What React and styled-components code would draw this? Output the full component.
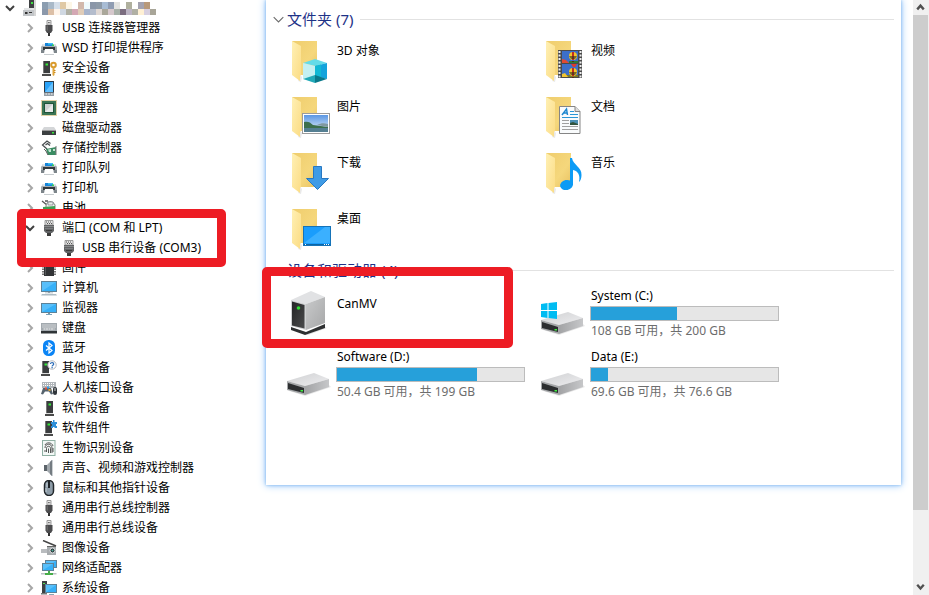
import React from 'react';
import styled, { createGlobalStyle } from 'styled-components';

const GlobalStyle = createGlobalStyle`
  *, *::before, *::after { box-sizing: border-box; }
  body {
    margin: 0;
    background: #fff;
    color: #000;
    font: 12px/16px "Noto Sans", "Noto Sans CJK SC", sans-serif;
    overflow: hidden;
  }
  ul { list-style: none; margin: 0; padding: 0; }
  button { font: inherit; color: inherit; background: none; border: 0; padding: 0; cursor: pointer; }
  svg { display: block; flex: none; }
`;

const Page = styled.main`
  display: flex;
  height: 100vh;
  overflow: hidden;
`;

const Tree = styled.ul`
  flex: 0 0 266px;
`;

const TreeRow = styled.div`
  display: flex;
  align-items: center;
  height: ${(p) => (p.$level === 0 ? 18 : 20)}px;
  padding-left: ${(p) => 2 + p.$level * 20}px;
  padding-bottom: ${(p) => (p.$level === 0 ? 2 : 0)}px;
  white-space: nowrap;
`;

const Toggle = styled.button`
  flex: 0 0 16px;
  height: 16px;
  color: ${(p) => (p.$open ? '#404040' : '#a6a6a6')};
`;

const ToggleSpace = styled.span`
  flex: 0 0 16px;
`;

const TreeIcon = styled.svg`
  width: 16px;
  height: 16px;
  margin: 0 5px 0 3px;
`;

const HighlightedGroup = styled.li`
  position: relative;
`;

const Highlight = styled.span`
  position: absolute;
  top: ${(p) => p.$top}px;
  right: ${(p) => p.$right}px;
  bottom: ${(p) => p.$bottom}px;
  left: ${(p) => p.$left}px;
  border: 9px solid #ed1c24;
  border-radius: 5px;
  pointer-events: none;
`;

const Explorer = styled.section`
  flex: 1;
  align-self: flex-start;
  min-width: 0;
  margin-right: 12px;
  padding: 7px 7px 78px;
  background: #fff;
  box-shadow: 0 0 3px #7fb6f0, 0 0 8px #8fc2f8;
`;

const GroupHeading = styled.h2`
  display: flex;
  align-items: center;
  gap: 7px;
  height: 24px;
  margin: 0 0 3px;
  color: #1e3287;
  font-size: 15px;
  font-weight: 400;
  line-height: 24px;

  &::after {
    content: "";
    flex: 1;
    height: 1px;
    background: #e2e2e2;
  }
`;

const GroupToggle = styled.button`
  display: flex;
  align-items: center;
  gap: 3px;
`;

const Tiles = styled.ul`
  display: grid;
  grid-template-columns: repeat(auto-fill, 254px);
  grid-auto-rows: ${(p) => p.$row}px;
  padding-left: 14px;
`;

const Tile = styled.li`
  position: relative;
  display: flex;
  gap: 6px;
  padding-top: ${(p) => p.$top}px;
`;

const TileIcon = styled.svg`
  width: 44px;
  height: 44px;
  margin-top: ${(p) => p.$drop || 0}px;
`;

const TileLabel = styled.span`
  padding-top: ${(p) => p.$drop}px;
`;

const DriveInfo = styled.div`
  display: flex;
  flex-direction: column;
  gap: 2px;
`;

const Capacity = styled.div`
  width: 189px;
  height: 15px;
  margin-left: -1px;
  border: 1px solid #bcbcbc;
  background: #e6e6e6;
`;

const Used = styled.div`
  height: 100%;
  background: #26a0da;
`;

const Caption = styled.span`
  color: #6d6d6d;
`;

const ScrollBar = styled.aside`
  display: flex;
  flex-direction: column;
  flex: 0 0 16px;
  padding-right: 1px;
  background: #f0f0f0;
`;

const ScrollButton = styled.button`
  flex: 0 0 15px;
  display: grid;
  place-items: center;
`;

const ScrollTrack = styled.div`
  flex: 1;
`;

const ScrollThumb = styled.div`
  height: 87.6%;
  background: #cdcdcd;
`;

const Chevron = ({ dir, size = 16, width = 2, color = 'currentColor' }) => {
  const paths = {
    right: 'M6 4l4 4-4 4',
    down: 'M4 6l4 4 4-4',
    up: 'M4.500 10l3.500-4 3.500 4',
    wide: 'M1 4.500l7 7 7-7',
    low: 'M4.500 5l3.500 4 3.500-4',
  };
  return (
    <svg width={size} height={size} viewBox="0 0 16 16" fill="none" stroke={color} strokeWidth={width} aria-hidden="true">
      <path d={paths[dir]} />
    </svg>
  );
};

const MOSAIC = [
  ['#8b9db0', '#a9b9c8', '#d5dfea', '#e0c9a4', '#fdf6e6', '#ffffff', '#d2b8ac', '#f0fafd', '#8a96a8', '#8d9aa8', '#a8bcd4', '#8f9cb2', '#e2e2e0', '#ffffff', '#b0b09e', '#ffffff', '#a3a2b0', '#b8997a', '#ffffff'],
  ['#8b98aa', '#dcbfa6', '#fff4ea', '#d0d8e2', '#b0b0a4', '#d4a8b4', '#e0ccb8', '#a7b4cc', '#b4bccc', '#e0d8d4', '#aaa79a', '#d6c8cc', '#a8b0a8', '#7b6d80', '#bcb4c4', '#b0b0a4', '#fff0d4', '#d8d0e0', '#a8a598'],
];

const MaskedName = () => (
  <svg width="114" height="13" viewBox="0 0 114 13" role="img" aria-label="Hidden computer name" shapeRendering="crispEdges">
    {MOSAIC.map((row, r) =>
      row.map((fill, c) => <rect key={`${r}-${c}`} x={c * 6} y={r === 0 ? 0 : 7} width="6" height={r === 0 ? 7 : 6} fill={fill} />)
    )}
  </svg>
);

const Tower = ({ x = 0 }) => (
  <g transform={`translate(${x} 0)`}>
    <path d="M1 1h7v12H1z" fill="#3b3d3f" />
    <path d="M1 1h1v12H1z" fill="#777" />
    <path d="M0 14h9v2H0z" fill="#4a4a4a" />
    <path d="M1 13h7v1H1z" fill="#ddd" />
    <path d="M3.500 3.500h2.500v2H3.500z" fill="#35e83a" />
  </g>
);

const Plug = (
  <>
    <path d="M6 .5h4V5H6z" fill="#ececec" stroke="#999" />
    <path d="M7 2h.8v1.200H7zM8.400 2h.8v1.200h-.8z" fill="#555" />
    <path d="M4.500 5h7v5.500L10 13H6l-1.500-2.500z" fill="#4b4b4d" />
    <path d="M7 13h2v3H7z" fill="#333" />
    <path d="M5.500 5.500h1.500v5H5.500z" fill="#666" />
  </>
);

const Printer = (
  <>
    <path d="M2 4h12l2 3v6H0V7z" fill="#a4abb0" />
    <path d="M2 4h12l1 2H1z" fill="#dfe4e7" />
    <path d="M4 3h8v3H4z" fill="#1583d8" />
    <path d="M7 3h5v1.500H7z" fill="#3cc0f2" />
    <path d="M11 4.500h2V6h-2z" fill="#35d052" />
    <path d="M2 7h12v3H2z" fill="#33393d" />
    <path d="M0 10h3v3H0zM13 10h3v3h-3z" fill="#7d858a" />
    <path d="M4 9h8l1 5H3z" fill="#fff" />
    <path d="M3 14h10v.8H3z" fill="#b8bec2" />
  </>
);

const SerialPort = (
  <>
    <path d="M4 .5h8V5H4z" fill="#e4e4e4" stroke="#888" strokeWidth=".8" />
    <path d="M5 1.500h1v1H5zM7 1.500h1v1H7zM9 1.500h1v1H9zM6 3h1v1H6zM8 3h1v1H8zM10 3h1v1h-1z" fill="#555" />
    <path d="M3 5h10v6l-2 2H5l-2-2z" fill="#616365" />
    <path d="M3 6h10v1H3zM4 8h8v.8H4z" fill="#858789" />
    <path d="M6 13h4v3H6z" fill="#3c3c3c" />
    <path d="M5 10.500h6" stroke="#3a3a3a" />
  </>
);

const BlueScreen = ({ x = 0, y = 0, w = 16, h = 11 }) => (
  <g>
    <rect x={x + 0.5} y={y + 0.5} width={w - 1} height={h - 1} fill="#36b0f8" stroke="#5d8298" />
    <path d={`M${x + 1} ${y + h - 1}L${x + w - 1} ${y + 1}H${x + 1}z`} fill="#6fc9fc" opacity=".6" />
  </g>
);

const TREE_ICONS = {
  computer: (
    <>
      <path d="M8 0h5v10H8z" fill="#3e4042" />
      <path d="M10 2h2v2h-2z" fill="#3ce041" />
      <path d="M13 0h2v16h-2z" fill="#d6d6d6" />
      <path d="M3 8h10v3H3z" fill="#e2e4e5" />
      <path d="M2 10h11v6H2z" fill="#c2c5c8" />
      <path d="M4 12h2.500v2H4zM8 12h3v1H8z" fill="#333" />
    </>
  ),
  usb: Plug,
  printer: Printer,
  security: (
    <>
      <Tower x={1} />
      <circle cx="12.500" cy="5" r="2.300" fill="none" stroke="#d99a2b" strokeWidth="2" />
      <path d="M11.500 7.500h2V15l-1 1-1-1z" fill="#e0a63b" />
      <path d="M13 10h1.500v1H13zM13 12h1.500v1H13z" fill="#c98a20" />
    </>
  ),
  portable: (
    <>
      <rect x="3" y="1" width="10" height="14.500" fill="#2b3a48" />
      <rect x="4" y="2" width="8" height="10" fill="#2aa2f8" />
      <path d="M4 12L12 2v10z" fill="#63c0ff" />
      <path d="M3 12.500h10v3H3z" fill="#9aa3aa" />
      <path d="M4.500 13.500h1.500v1H4.500zM7.200 13.500h1.600v1H7.200zM10 13.500h1.500v1H10z" fill="#f4f4f4" />
    </>
  ),
  cpu: (
    <>
      <rect x=".5" y=".5" width="15" height="15" fill="none" stroke="#c5a54e" strokeDasharray="1 1" />
      <rect x="1" y="1" width="14" height="14" fill="#3b7555" />
      <rect x="3.500" y="3.500" width="9" height="9" fill="#cfd2d1" stroke="#1f5539" />
      <path d="M4 12L12 4v8z" fill="#e8eae9" />
    </>
  ),
  disk: (
    <>
      <path d="M3 7h10l2 3H1z" fill="#d4d6d8" />
      <path d="M1 10h14v5H1z" fill="#3c3f41" />
      <path d="M1 10h14v1H1z" fill="#999" />
      <path d="M11 12h2v1.500h-2z" fill="#35e83a" />
    </>
  ),
  storage: (
    <>
      <path d="M6 9L1.500 5 6 1l3.500 2.500M4.500 5l2-1.500L9 5.500" fill="none" stroke="#4a4f51" strokeWidth="1.300" />
      <path d="M5 9l10-2v8H7z" fill="#3a8c62" />
      <path d="M7 9.500l3-.5v3H8zM12 9h2v2h-2z" fill="#c4e4d2" />
      <path d="M3 9l2 2 2 4" fill="none" stroke="#555" />
      <path d="M15 6v9" stroke="#777" />
    </>
  ),
  battery: (
    <>
      <path d="M1 1l5 4M4 1h3" stroke="#555" strokeWidth="1.300" />
      <path d="M5 6c0-5 7-6 9-1v6H5z" fill="#f2f5f2" stroke="#7b857d" />
      <path d="M2 7l12-1v8H2z" fill="#3f9f54" />
      <path d="M7 2h5v3H7z" fill="#e8eee8" stroke="#667" strokeWidth=".6" />
      <path d="M0 13h15" stroke="#444" />
    </>
  ),
  serial: SerialPort,
  firmware: (
    <>
      <path d="M2 1v14M14 1v14" stroke="#777" strokeWidth="2" strokeDasharray="1.500 1" />
      <rect x="3" y="0" width="10" height="16" fill="#323436" />
      <path d="M4 1h1v14H4z" fill="#55585a" />
    </>
  ),
  pc: (
    <>
      <BlueScreen y={1} h={11} />
      <path d="M7 12h2v1H7z" fill="#7b929f" />
      <path d="M4 12.500h8v.8H4z" fill="#a5b3bb" />
      <path d="M1 14h14l1 1.500H0z" fill="#aebcc4" />
    </>
  ),
  monitor: (
    <>
      <BlueScreen y={3} h={10} />
      <path d="M7 13h2v1H7z" fill="#7b929f" />
      <path d="M5 14h6v1H5z" fill="#7ba3ba" />
    </>
  ),
  keyboard: (
    <>
      <path d="M0 3h16v9H0z" fill="#a2a9ae" />
      <path d="M0 11h16v2.500H0z" fill="#2f3437" />
      <path d="M1.500 5h13M1.500 7h13" stroke="#fff" strokeDasharray="1 1" />
      <path d="M2.500 9h11" stroke="#f3f3f3" strokeDasharray="2 .5" />
    </>
  ),
  bluetooth: (
    <>
      <rect x="2" y="0" width="12" height="16" rx="5.500" fill="#0a84f5" />
      <path d="M5 5.500l6 5L8 13V3l3 2.500-6 5" fill="none" stroke="#fff" strokeWidth="1.200" />
    </>
  ),
  other: (
    <>
      <Tower />
      <circle cx="11" cy="5" r="4.200" fill="#fff" stroke="#b4b8bc" />
      <path d="M9.500 4c0-2 3.200-1.900 3.200 0 0 1.300-1.600 1.100-1.600 2.400M11.100 7v1.300" fill="none" stroke="#2c6db8" strokeWidth="1.200" />
    </>
  ),
  hid: (
    <>
      <path d="M1 2h14v6H1z" fill="#b0b5b9" />
      <path d="M2 3.500h12M2 5.500h12" stroke="#fff" strokeDasharray="1 1" />
      <path d="M0 14l2-6h8l2 6-2 .5-2-3H4l-2 3z" fill="#56636d" />
      <path d="M4 7.500h2v2H4z" fill="#e34e3b" />
      <path d="M6 6.500h2v2H6z" fill="#2fa4ec" />
      <path d="M7.500 9h2v2h-2z" fill="#dfa638" />
      <rect x="12" y="7" width="4" height="8" rx="2" fill="#30363b" />
      <path d="M14 8v3" stroke="#ccc" />
    </>
  ),
  software: <Tower x={4} />,
  component: (
    <>
      <Tower x={3} />
      <path d="M10 2h2V0h1.500v2H16v2h-1v2h1v2h-2.500V7H12v1h-2V6h1V4h-1z" fill="#2f8fd8" />
    </>
  ),
  finger: (
    <>
      <rect x="1.500" y=".5" width="12.500" height="15" fill="#f3f8f6" stroke="#8fb0a3" />
      <path d="M4 5c1-3 7-3 8 1M4 8c0-5 7-5 7 0v5M5.500 12V8.500c0-3 4-3 4 0V13M7.500 8.500V13M4 10v2M12 8v4" fill="none" stroke="#444" strokeWidth=".9" />
    </>
  ),
  speaker: (
    <>
      <path d="M3 5h3v6H3z" fill="#5c646a" />
      <path d="M6 5l5-5v16l-5-5z" fill="#a1a8ad" />
      <path d="M9 2l2-2v16l-2-2z" fill="#737b81" />
      <path d="M11 0h1v16h-1z" fill="#ccd0d3" />
    </>
  ),
  mouse: (
    <>
      <rect x="3.500" y=".5" width="9" height="15" rx="4.500" fill="#8d9ca8" stroke="#22272b" strokeWidth="1.500" />
      <path d="M8 1v7" stroke="#1e2327" strokeWidth="2" />
      <path d="M5 8v4M6 3v4" stroke="#c4ced6" />
    </>
  ),
  camera: (
    <>
      <path d="M2 .5L15 6" stroke="#444" strokeWidth="1.500" />
      <path d="M0 9h6v4H0z" fill="#b9bcbf" />
      <path d="M6 6h9v9H6z" fill="#a8acaf" />
      <path d="M6 6h9v1H6z" fill="#666" />
      <circle cx="11.500" cy="10.500" r="2.500" fill="#293034" stroke="#e4e7e9" />
      <circle cx="11.500" cy="10.500" r="1" fill="#4fae9c" />
    </>
  ),
  network: (
    <>
      <BlueScreen x={4} y={0} w={12} h={8} />
      <BlueScreen x={1} y={3} w={12} h={8} />
      <path d="M7 11h2v2h3v2H4v-2h3z" fill="#46ad49" />
      <path d="M0 13h4v1.500H0zM12 13h3.500v1.500H12z" fill="#b9c0c3" />
    </>
  ),
  system: (
    <>
      <path d="M1 1h5v12H1z" fill="#3d4043" />
      <path d="M0 13h6v1.500H0z" fill="#777" />
      <path d="M2 3h2v1H2z" fill="#4fe152" />
      <BlueScreen x={4} y={4} w={12} h={9} />
      <path d="M8 14h5v1H8z" fill="#8aa7b6" />
    </>
  ),
};

const BEFORE_PORTS = [
  ['usb', 'USB 连接器管理器'],
  ['printer', 'WSD 打印提供程序'],
  ['security', '安全设备'],
  ['portable', '便携设备'],
  ['cpu', '处理器'],
  ['disk', '磁盘驱动器'],
  ['storage', '存储控制器'],
  ['printer', '打印队列'],
  ['printer', '打印机'],
  ['battery', '电池'],
];

const AFTER_PORTS = [
  ['firmware', '固件'],
  ['pc', '计算机'],
  ['monitor', '监视器'],
  ['keyboard', '键盘'],
  ['bluetooth', '蓝牙'],
  ['other', '其他设备'],
  ['hid', '人机接口设备'],
  ['software', '软件设备'],
  ['component', '软件组件'],
  ['finger', '生物识别设备'],
  ['speaker', '声音、视频和游戏控制器'],
  ['mouse', '鼠标和其他指针设备'],
  ['usb', '通用串行总线控制器'],
  ['usb', '通用串行总线设备'],
  ['camera', '图像设备'],
  ['network', '网络适配器'],
  ['system', '系统设备'],
];

const Node = ({ level, icon, name, open = false, leaf = false, children }) => (
  <TreeRow $level={level}>
    {leaf ? (
      <ToggleSpace />
    ) : (
      <Toggle $open={open} aria-expanded={open} aria-label={name}>
        <Chevron dir={open ? 'down' : 'right'} />
      </Toggle>
    )}
    <TreeIcon viewBox="0 0 16 16" aria-hidden="true">{TREE_ICONS[icon]}</TreeIcon>
    {children || <span>{name}</span>}
  </TreeRow>
);

const Folder = (
  <>
    <path d="M5 2h25v34H5z" fill="url(#folderBack)" />
    <path d="M13 36l2 2-1 5-3-1z" fill="#e9e9e9" />
    <path d="M5 2l9 5v29l-1 1v5L5 36z" fill="url(#folderFlap)" />
  </>
);

const Balloon = ({ x, y }) => (
  <g transform={`translate(${x} ${y})`}>
    <ellipse cx="0" cy="0" rx="4" ry="4" fill="#f3c52b" />
    <path d="M-1-4h2v8h-2z" fill="#c22d20" />
    <path d="M-4 0h8l-2 3h-4z" fill="#2b2f20" opacity=".6" />
    <path d="M-1 5h2v1h-2z" fill="#5a2d10" />
  </g>
);

const Drive = (
  <>
    <path d="M2 39l16 5 26-9-2-2z" fill="#e8e8e8" />
    <path d="M0 29l27-8 15 6-24 7z" fill="url(#metalTop)" />
    <path d="M18 34l24-7v8l-24 8z" fill="url(#metalSide)" />
    <path d="M0 29l18 5v9L0 38z" fill="#a5a7a9" />
    <path d="M1 31l16 5v5L1 37z" fill="#2c2e30" />
    <path d="M13.500 38h2.500v1.500h-2.500z" fill="#3df03f" />
  </>
);

const TILE_ICONS = {
  objects: (
    <>
      {Folder}
      <path d="M28 20l12 4-12 3-12-3z" fill="#63dbe8" />
      <path d="M16 24l12 3v10l-12 3z" fill="#c4f0f2" />
      <path d="M28 27l12-3v16l-12-3z" fill="#12a3dc" />
      <path d="M28 27l6-1.500V39l-6-2z" fill="#10b8d4" />
      <path d="M16 40l12-4v8z" fill="#21a9b8" />
      <path d="M28 36l12 4-12 4z" fill="#08798b" />
    </>
  ),
  pictures: (
    <>
      {Folder}
      <rect x="15.500" y="18.500" width="27" height="20" fill="#fff" stroke="#9b9b9b" />
      <rect x="17" y="20" width="24" height="17" fill="url(#sky)" />
      <path d="M17 27c4-1 6 0 9 3l15 2v2H17z" fill="#3d6f4c" />
      <path d="M17 33h24v4H17z" fill="#557f92" />
      <path d="M30 30c4-2 7-2 11-1v3z" fill="#8098a0" />
    </>
  ),
  downloads: (
    <>
      {Folder}
      <path d="M26.500 15.500h8V27.500h7L30.500 38.500 19.500 27.500h7z" fill="#3f9be6" stroke="#2878c2" />
    </>
  ),
  desktop: (
    <>
      {Folder}
      <rect x="16.500" y="19.500" width="27" height="19" fill="#1a9dfc" stroke="#1573b8" />
      <path d="M17 36L38 20h5v16z" fill="#3bb0ff" />
      <path d="M17 37h26v1H17z" fill="#0c64a4" />
      <path d="M18 37.500h1M37 37.500h5" stroke="#fff" strokeDasharray="1 1" />
    </>
  ),
  videos: (
    <>
      {Folder}
      <rect x="17" y="11" width="24" height="28" fill="#4a4a4a" />
      <path d="M18.500 12v27M39.500 12v27" stroke="#eee" strokeWidth="2" strokeDasharray="2 1.500" />
      <rect x="21" y="12" width="16" height="12" fill="#3c6fc9" />
      <rect x="21" y="25" width="16" height="13" fill="#3c6fc9" />
      <path d="M21 20l4 1 3 3h-7z" fill="#e04b33" />
      <path d="M28 22h9v2h-9z" fill="#2f7a35" />
      <path d="M21 36h16v2H21z" fill="#7d7a29" />
      <Balloon x={32} y={17} />
      <path d="M30 25h6l-2 3h-2z" fill="#dd3c2c" />
      <Balloon x={32} y={33} />
      <path d="M21 35l3-1 3 4h-6z" fill="#f0c534" />
    </>
  ),
  documents: (
    <>
      {Folder}
      <path d="M18.500 11.500H34l5 5v22H18.500z" fill="#f9fbfc" stroke="#858585" />
      <path d="M34 11.500v5h5" fill="#ddd" stroke="#858585" />
      <path d="M21 20l4.500-6 1 6M22 18h4" fill="none" stroke="#1d87cf" strokeWidth="1.500" />
      <path d="M29 16.500h4M29 19.500h8M21 22.500h16" stroke="#2a96d6" />
      <path d="M21 25.500h7M21 28.500h7M21 31.500h16M21 34.500h16" stroke="#a0a0a0" />
      <rect x="29" y="25" width="8" height="5" fill="#4b8fb4" />
      <path d="M29 28l3-1 5 2v1h-8z" fill="#31543d" />
    </>
  ),
  music: (
    <>
      {Folder}
      <ellipse cx="25.500" cy="34" rx="6.500" ry="5" transform="rotate(-12 25.500 34)" fill="#0c9bf5" />
      <path d="M29 7h2c1 7 10 9 9.500 17 0 3-1 6-2.500 7 1.500-7-1-11-6-12v15h-3z" fill="#0c9bf5" />
    </>
  ),
  drive: Drive,
  systemDrive: (
    <>
      {Drive}
      <path d="M0 13l6.500-1v7H0zM7.500 12L16 11v8H7.500zM0 20h6.500v7L0 26zM7.500 20H16v8l-8.500-1z" fill="#00bcf2" />
    </>
  ),
  tower: (
    <>
      <path d="M18 44l20-8 2 1-19 7z" fill="#e4e4e4" />
      <path d="M4 36l15 5 19-8v4L18 44 4 39z" fill="#2e3031" />
      <path d="M4 9L24 0l14 6-19 7z" fill="#e1e2e4" />
      <path d="M19 13l19-7v26l-19 7z" fill="url(#towerSide)" />
      <path d="M4 9l15 4v26L4 35z" fill="#cfd1d2" />
      <path d="M5 10.500l12.500 3.500v23.500L5 34.500z" fill="url(#towerFront)" />
      <circle cx="11.500" cy="17" r="1.800" fill="#2fe033" />
    </>
  ),
};

const IconPaints = () => (
  <svg width="0" height="0" aria-hidden="true">
    <defs>
      <linearGradient id="folderBack" x1="0" y1="0" x2="1" y2="1">
        <stop offset="0" stopColor="#efcd6d" />
        <stop offset=".6" stopColor="#f5d77c" />
        <stop offset="1" stopColor="#e8c262" />
      </linearGradient>
      <linearGradient id="folderFlap" x1="0" y1="0" x2="1" y2="1">
        <stop offset="0" stopColor="#fff0b4" />
        <stop offset="1" stopColor="#fbdc84" />
      </linearGradient>
      <linearGradient id="sky" x1="0" y1="0" x2="0" y2="1">
        <stop offset="0" stopColor="#5b97e4" />
        <stop offset="1" stopColor="#e6f0f8" />
      </linearGradient>
      <linearGradient id="metalTop" x1="0" y1="0" x2="1" y2="1">
        <stop offset="0" stopColor="#cfd0d2" />
        <stop offset="1" stopColor="#eeeef0" />
      </linearGradient>
      <linearGradient id="metalSide" x1="0" y1="0" x2="1" y2="0">
        <stop offset="0" stopColor="#a2a3a5" />
        <stop offset="1" stopColor="#c6c7c9" />
      </linearGradient>
      <linearGradient id="towerSide" x1="0" y1="0" x2="1" y2="1">
        <stop offset="0" stopColor="#c9cacb" />
        <stop offset="1" stopColor="#a6a7a8" />
      </linearGradient>
      <linearGradient id="towerFront" x1="0" y1="0" x2="1" y2="1">
        <stop offset="0" stopColor="#242526" />
        <stop offset="1" stopColor="#4a4b4c" />
      </linearGradient>
    </defs>
  </svg>
);

const FOLDERS = [
  ['objects', '3D 对象'],
  ['videos', '视频'],
  ['pictures', '图片'],
  ['documents', '文档'],
  ['downloads', '下载'],
  ['music', '音乐'],
  ['desktop', '桌面'],
];

const DRIVES = [
  { icon: 'tower', name: 'CanMV', highlighted: true },
  { icon: 'systemDrive', name: 'System (C:)', used: 46, caption: '108 GB 可用，共 200 GB' },
  { icon: 'drive', name: 'Software (D:)', used: 75, caption: '50.4 GB 可用，共 199 GB' },
  { icon: 'drive', name: 'Data (E:)', used: 9, caption: '69.6 GB 可用，共 76.6 GB' },
];

const Heading = ({ children }) => (
  <GroupHeading>
    <GroupToggle aria-expanded="true">
      <Chevron dir="wide" size={11} width={1.6} color="#6b6b6b" />
      {children}
    </GroupToggle>
  </GroupHeading>
);

export default function App() {
  return (
    <Page lang="zh-CN">
      <GlobalStyle />
      <Tree>
        <li>
          <Node level={0} icon="computer" name="Computer" open>
            <MaskedName />
          </Node>
          <ul>
            {BEFORE_PORTS.map(([icon, name]) => (
              <li key={name}><Node level={1} icon={icon} name={name} /></li>
            ))}
            <HighlightedGroup>
              <Node level={1} icon="serial" name="端口 (COM 和 LPT)" open />
              <ul>
                <li><Node level={2} icon="serial" name="USB 串行设备 (COM3)" leaf /></li>
              </ul>
              <Highlight $top={-9} $right={40} $bottom={-9} $left={17} />
            </HighlightedGroup>
            {AFTER_PORTS.map(([icon, name]) => (
              <li key={name}><Node level={1} icon={icon} name={name} /></li>
            ))}
          </ul>
        </li>
      </Tree>

      <Explorer>
        <Heading>文件夹 (7)</Heading>
        <Tiles $row={56}>
          {FOLDERS.map(([icon, name]) => (
            <Tile key={name} $top={5}>
              <TileIcon viewBox="0 0 44 44" aria-hidden="true">{TILE_ICONS[icon]}</TileIcon>
              <TileLabel $drop={4}>{name}</TileLabel>
            </Tile>
          ))}
        </Tiles>
        <Heading>设备和驱动器 (4)</Heading>
        <Tiles $row={61}>
          {DRIVES.map((d) => (
            <Tile key={d.name} $top={3}>
              <TileIcon $drop={3} viewBox="0 0 44 44" aria-hidden="true">{TILE_ICONS[d.icon]}</TileIcon>
              {d.caption ? (
                <DriveInfo>
                  <span>{d.name}</span>
                  <Capacity role="meter" aria-label={d.name} aria-valuemin={0} aria-valuemax={100} aria-valuenow={d.used}>
                    <Used style={{ width: `${d.used}%` }} />
                  </Capacity>
                  <Caption>{d.caption}</Caption>
                </DriveInfo>
              ) : (
                <TileLabel $drop={8}>{d.name}</TileLabel>
              )}
              {d.highlighted && <Highlight $top={-18} $right={28} $bottom={-2} $left={-25} />}
            </Tile>
          ))}
        </Tiles>
      </Explorer>

      <ScrollBar>
        <ScrollButton aria-label="Scroll up"><Chevron dir="up" color="#505050" width={2.5} size={15} /></ScrollButton>
        <ScrollTrack><ScrollThumb /></ScrollTrack>
        <ScrollButton aria-label="Scroll down"><Chevron dir="low" color="#505050" width={2.5} size={15} /></ScrollButton>
      </ScrollBar>
      <IconPaints />
    </Page>
  );
}
